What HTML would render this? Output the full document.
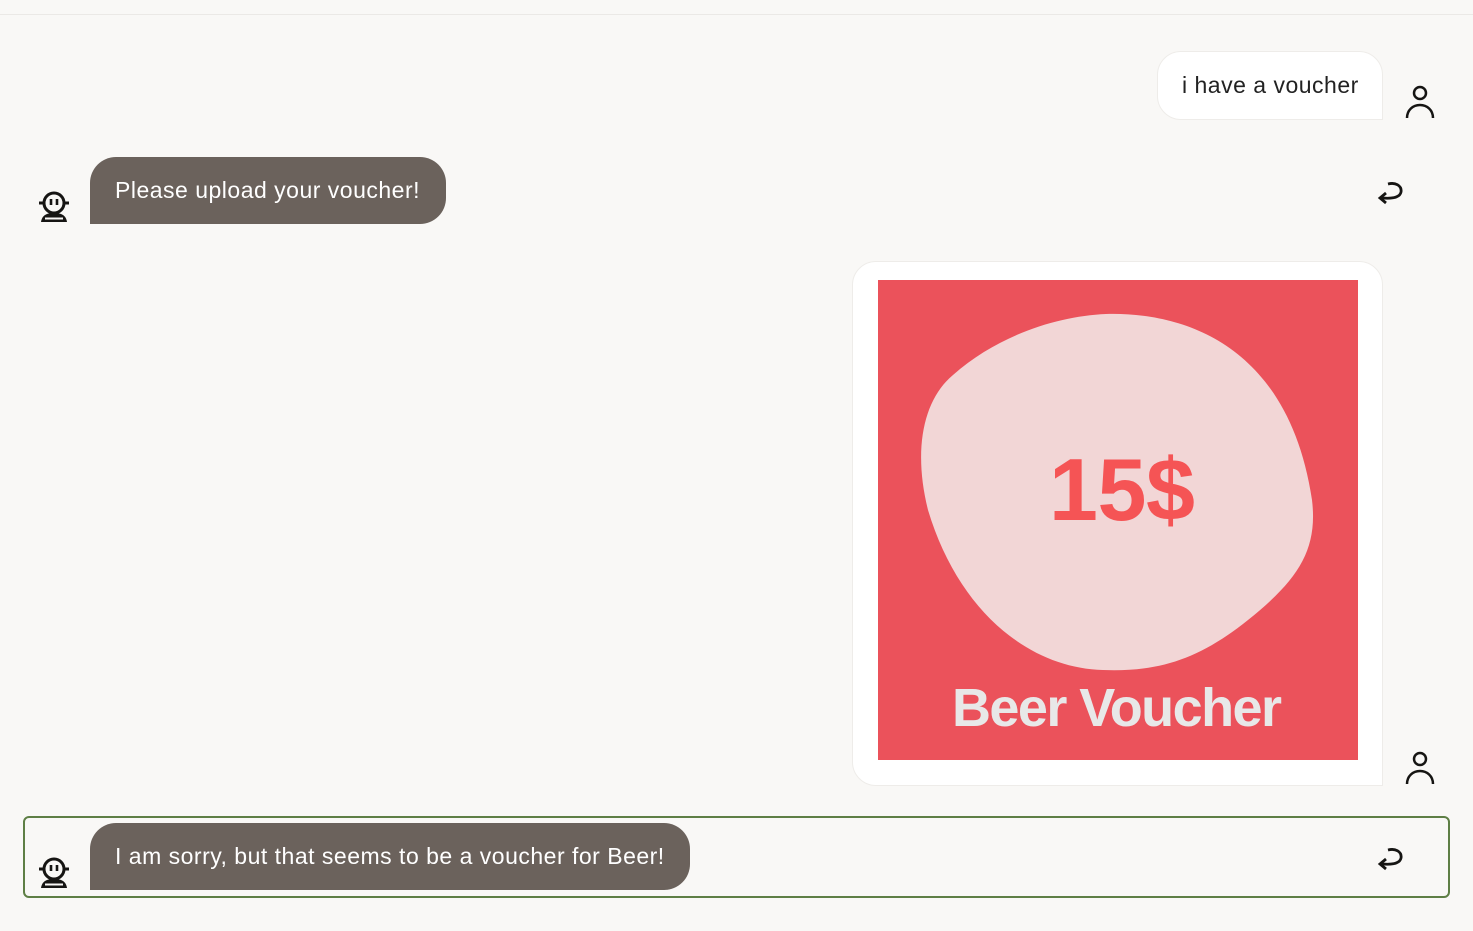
<!DOCTYPE html>
<html><head><meta charset="utf-8"><style>
*{margin:0;padding:0;box-sizing:border-box}
body{width:1473px;height:931px;background:#f9f8f6;font-family:"Liberation Sans",sans-serif;position:relative;overflow:hidden}
.topline{position:absolute;left:0;top:14px;width:1473px;height:1px;background:#ebe9e6}
.ub{position:absolute;background:#fff;border:1px solid #eeece9;border-radius:24px 24px 0 24px;color:#222;font-size:23px;letter-spacing:0.5px}
.bb{position:absolute;background:#6b625c;color:#fff;font-size:23px;letter-spacing:0.5px;border-radius:26px 26px 26px 0;padding:0 25px;display:flex;align-items:center;white-space:nowrap}
.ic{position:absolute}
.frame{position:absolute;left:23px;top:816px;width:1427px;height:82px;border:2px solid #5e7f45;border-radius:6px}
</style></head><body>
<div class="topline"></div>

<div class="ub" style="left:1157px;top:51px;width:226px;height:69px;display:flex;align-items:center;padding-left:24px">i have a voucher</div>
<svg class="ic" style="left:1403px;top:84px" width="34" height="36" viewBox="0 0 34 36" fill="none" stroke="#161513" stroke-width="2.5"><circle cx="17" cy="9" r="6"/><path d="M4 34 C4 26 10 21 17 21 C24 21 30 26 30 34"/></svg>

<svg class="ic" style="left:36px;top:190px" width="36" height="34" viewBox="0 0 36 34"><g fill="none" stroke="#161513" stroke-width="3"><circle cx="18" cy="13" r="10"/><path d="M3 13h5M28 13h5"/></g><path d="M15 9v6M21 9v6" stroke="#161513" stroke-width="2.6"/><path d="M5 32 C6 25 11 23 18 23 C25 23 30 25 31 32Z" fill="#161513"/><path d="M9 28.5h18" stroke="#f9f8f6" stroke-width="2"/></svg>
<div class="bb" style="left:90px;top:157px;width:356px;height:67px">Please upload your voucher!</div>
<svg class="ic" style="left:1374px;top:178px" width="32" height="30" viewBox="0 0 32 30" fill="none" stroke="#161513" stroke-width="2.8"><path d="M14 6 C22 4 28 8 27 14 C26 19 20 21 8 20"/><path d="M12 15 L6 20 L12 25"/></svg>

<div class="ub" style="left:852px;top:261px;width:531px;height:525px"></div>
<svg class="ic" style="left:878px;top:280px" width="480" height="480" viewBox="0 0 480 480">
<rect width="480" height="480" fill="#eb525b"/>
<path d="M228,34 C300,32 410,60 434,220 C440,270 420,300 370,340 C320,380 280,392 225,390 C150,388 80,330 50,230 C35,170 45,120 75,95 C120,55 180,36 228,34Z" fill="#f2d6d6"/>
<text x="244" y="240" text-anchor="middle" font-family="Liberation Sans,sans-serif" font-weight="bold" font-size="88" fill="#f55455" textLength="146">15$</text>
<text x="239" y="446" text-anchor="middle" font-family="Liberation Sans,sans-serif" font-weight="bold" font-size="54" fill="#e8e8e8" textLength="330">Beer Voucher</text>
</svg>
<svg class="ic" style="left:1403px;top:750px" width="34" height="36" viewBox="0 0 34 36" fill="none" stroke="#161513" stroke-width="2.5"><circle cx="17" cy="9" r="6"/><path d="M4 34 C4 26 10 21 17 21 C24 21 30 26 30 34"/></svg>

<div class="frame"></div>
<svg class="ic" style="left:36px;top:856px" width="36" height="34" viewBox="0 0 36 34"><g fill="none" stroke="#161513" stroke-width="3"><circle cx="18" cy="13" r="10"/><path d="M3 13h5M28 13h5"/></g><path d="M15 9v6M21 9v6" stroke="#161513" stroke-width="2.6"/><path d="M5 32 C6 25 11 23 18 23 C25 23 30 25 31 32Z" fill="#161513"/><path d="M9 28.5h18" stroke="#f9f8f6" stroke-width="2"/></svg>
<div class="bb" style="left:90px;top:823px;width:600px;height:67px">I am sorry, but that seems to be a voucher for Beer!</div>
<svg class="ic" style="left:1374px;top:844px" width="32" height="30" viewBox="0 0 32 30" fill="none" stroke="#161513" stroke-width="2.8"><path d="M14 6 C22 4 28 8 27 14 C26 19 20 21 8 20"/><path d="M12 15 L6 20 L12 25"/></svg>
</body></html>
